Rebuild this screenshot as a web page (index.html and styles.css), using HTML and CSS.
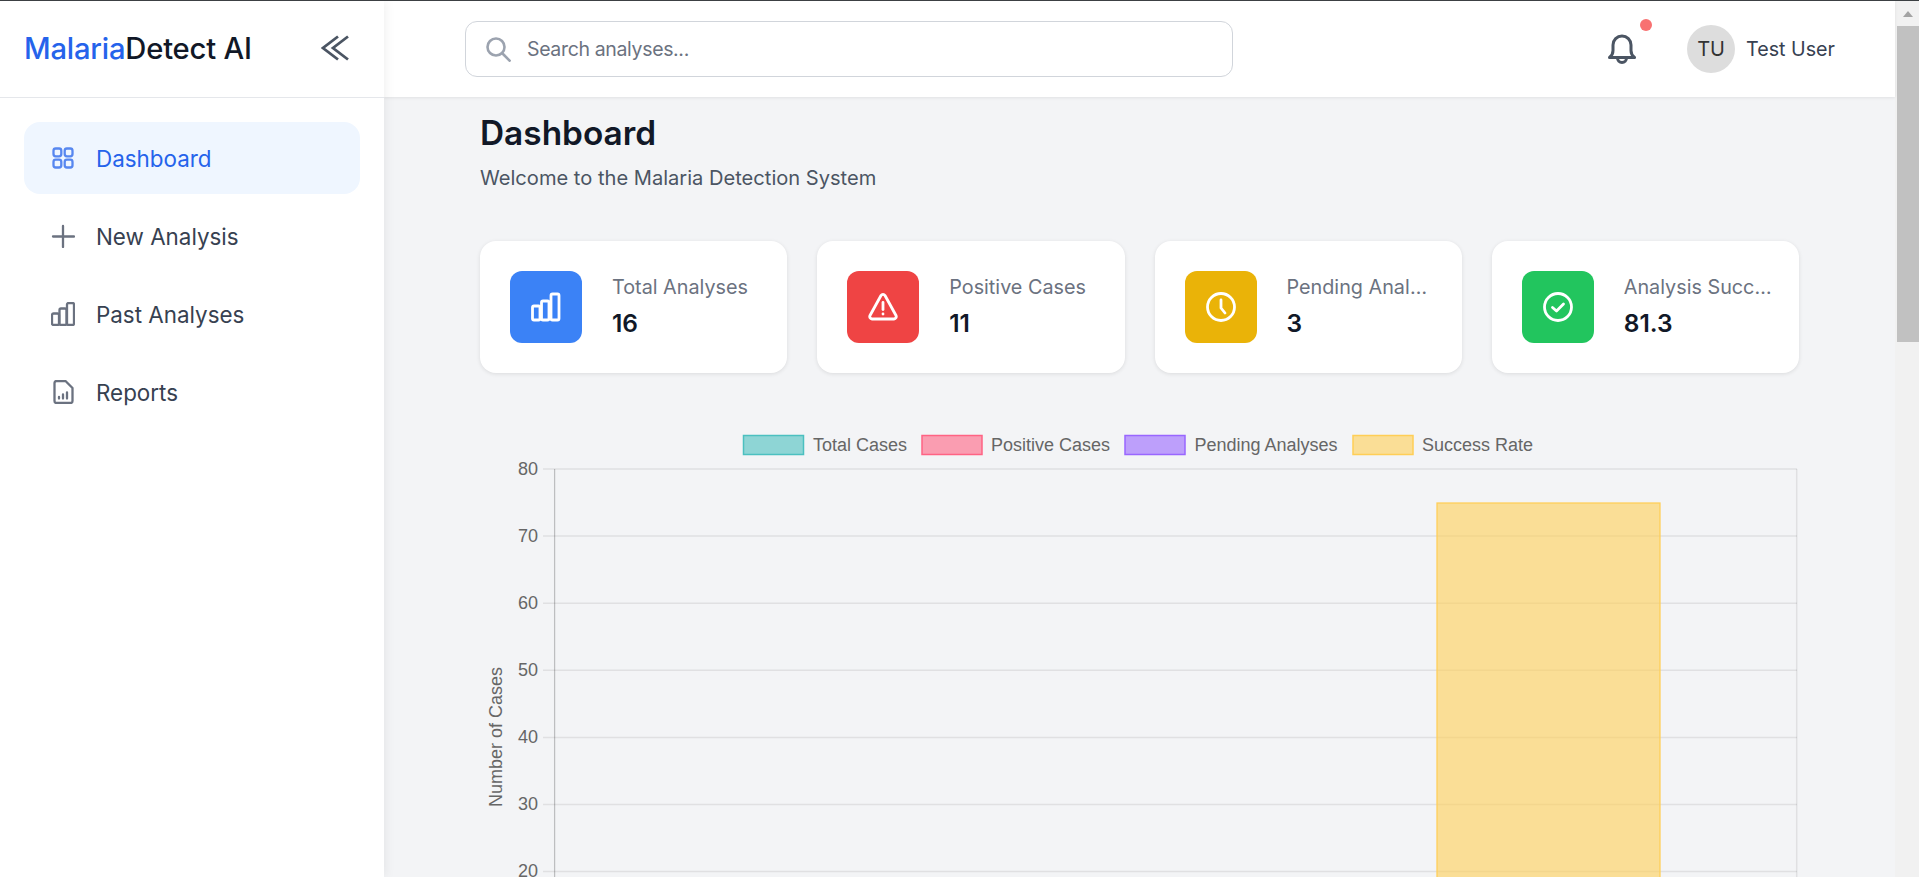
FILE: index.html
```html
<!DOCTYPE html>
<html lang="en">
<head>
<meta charset="utf-8">
<title>MalariaDetect AI</title>
<link rel="stylesheet" href="styles.css">
</head>
<body>
<div class="topline"></div>
<div class="app">
  <aside class="sidebar">
    <div class="brand">
      <div class="logo"><span class="logo-accent">Malaria</span>Detect AI</div>
      <svg class="collapse" viewBox="0 0 28 26" fill="none" stroke="currentColor" stroke-width="2.800"><path d="M17 1.500 2 13l15 11.500"/><path d="M27 1.500 12 13l15 11.500"/></svg>
    </div>
    <nav class="nav">
      <a class="nav-item active">
        <svg class="nav-icon" viewBox="0 0 24 24" fill="none" stroke="currentColor" stroke-width="2.300"><rect x="2.500" y="2.500" width="7.800" height="7.800" rx="2.200"/><rect x="13.700" y="2.500" width="7.800" height="7.800" rx="2.200"/><rect x="2.500" y="13.700" width="7.800" height="7.800" rx="2.200"/><rect x="13.700" y="13.700" width="7.800" height="7.800" rx="2.200"/></svg>
        <span>Dashboard</span>
      </a>
      <a class="nav-item">
        <svg class="nav-icon" viewBox="0 0 24 24" fill="none" stroke="currentColor" stroke-width="2.300" stroke-linecap="round"><path d="M12 2v21M2 12.500h21"/></svg>
        <span>New Analysis</span>
      </a>
      <a class="nav-item">
        <svg class="nav-icon" viewBox="0 0 24 24" fill="none" stroke="currentColor" stroke-width="2.300" stroke-linejoin="round"><rect x="1" y="11.500" width="7" height="11.500" rx="1.500"/><rect x="8.500" y="6.500" width="7" height="16.500" rx="1.500"/><rect x="16" y="1" width="7" height="22" rx="1.500"/></svg>
        <span>Past Analyses</span>
      </a>
      <a class="nav-item">
        <svg class="nav-icon" viewBox="0 0 24 24" fill="none" stroke="currentColor" stroke-width="2.300" stroke-linejoin="round" stroke-linecap="round"><path d="M5.500 1h9l7 7v13a2 2 0 0 1-2 2h-14a2 2 0 0 1-2-2V3a2 2 0 0 1 2-2z"/><path d="M8 18.500v-1.500M12 18.500v-4M16 18.500v-6"/></svg>
        <span>Reports</span>
      </a>
    </nav>
  </aside>
  <div class="main">
    <header class="header">
      <label class="search">
        <svg class="search-icon" viewBox="0 0 25 25" fill="none" stroke="currentColor" stroke-width="2.600"><circle cx="10" cy="10" r="8.500"/><path d="m16.500 16.500 8 8"/></svg>
        <span class="placeholder">Search analyses...</span>
      </label>
      <div class="header-right">
        <div class="bell">
          <svg class="bell-icon" viewBox="0 0 28 30" fill="none" stroke="currentColor" stroke-width="3" stroke-linecap="round" stroke-linejoin="round"><path d="M1.500 23.500c2-1.500 3.500-3.500 3.500-7V11a9 9 0 0 1 18 0v5.500c0 3.500 1.500 5.500 3.500 7z"/><path d="M9.500 24a4.500 4.500 0 0 0 9 0"/></svg>
          <span class="bell-dot"></span>
        </div>
        <div class="user">
          <div class="avatar">TU</div>
          <span class="user-name">Test User</span>
        </div>
      </div>
    </header>
    <main class="content">
      <h1 class="title">Dashboard</h1>
      <p class="subtitle">Welcome to the Malaria Detection System</p>
      <section class="cards">
        <div class="card">
          <div class="card-icon blue"><svg viewBox="0 0 30 30" fill="none" stroke="currentColor" stroke-width="2.800" stroke-linejoin="round"><rect x="1.500" y="14" width="7.500" height="14" rx="1.500"/><rect x="10.500" y="9" width="7.500" height="19" rx="1.500"/><rect x="20" y="2" width="8" height="26" rx="1.500"/></svg></div>
          <div class="card-text"><div class="card-label">Total Analyses</div><div class="card-value">16</div></div>
        </div>
        <div class="card">
          <div class="card-icon red"><svg viewBox="0 0 30 30" fill="none" stroke="currentColor" stroke-width="2.800" stroke-linejoin="round" stroke-linecap="round"><path d="M13 3.500a2.400 2.400 0 0 1 4 0l11 20a2.400 2.400 0 0 1-2 3.500H4a2.400 2.400 0 0 1-2-3.500z"/><path d="M15 10.500v7"/><path d="M15 22h.01"/></svg></div>
          <div class="card-text"><div class="card-label">Positive Cases</div><div class="card-value">11</div></div>
        </div>
        <div class="card">
          <div class="card-icon yellow"><svg viewBox="0 0 30 30" fill="none" stroke="currentColor" stroke-width="2.800" stroke-linecap="round" stroke-linejoin="round"><circle cx="15" cy="15" r="13.500"/><path d="M15 8v8l4 5"/></svg></div>
          <div class="card-text"><div class="card-label">Pending Analyses</div><div class="card-value">3</div></div>
        </div>
        <div class="card">
          <div class="card-icon green"><svg viewBox="0 0 30 30" fill="none" stroke="currentColor" stroke-width="2.800" stroke-linecap="round" stroke-linejoin="round"><circle cx="15" cy="15" r="13.500"/><path d="m9.500 15.500 4 3.500 7-7"/></svg></div>
          <div class="card-text"><div class="card-label">Analysis Success Rate</div><div class="card-value">81.3</div></div>
        </div>
      </section>
      <section class="chart">
        <svg class="chart-svg" viewBox="0 0 1319 457" width="1319" height="457">
          <g class="legend">
            <rect class="sw teal" x="263.500" y="15.500" width="60" height="19"/><text x="333" y="31">Total Cases</text>
            <rect class="sw pink" x="442" y="15.500" width="60" height="19"/><text x="511" y="31">Positive Cases</text>
            <rect class="sw purple" x="645" y="15.500" width="60" height="19"/><text x="714.500" y="31">Pending Analyses</text>
            <rect class="sw amber" x="873" y="15.500" width="60" height="19"/><text x="942" y="31">Success Rate</text>
          </g>
          <g class="grid">
            <path d="M63 49H1317M63 116.100H1317M63 183.200H1317M63 250.300H1317M63 317.400H1317M63 384.500H1317M63 451.600H1317"/>
            <path d="M1316.700 49V457"/>
          </g>
          <path class="axis" d="M74.600 49V457"/>
          <g class="ticks">
            <text x="58" y="55">80</text>
            <text x="58" y="122">70</text>
            <text x="58" y="189">60</text>
            <text x="58" y="256">50</text>
            <text x="58" y="323">40</text>
            <text x="58" y="390">30</text>
            <text x="58" y="457">20</text>
          </g>
          <text class="axis-title" transform="translate(22 317) rotate(-90)">Number of Cases</text>
          <rect class="bar" x="957" y="83" width="223" height="380"/>
        </svg>
      </section>
    </main>
  </div>
  <div class="scrollbar">
    <div class="scroll-arrow"></div>
    <div class="scroll-thumb"></div>
  </div>
</div>
</body>
</html>
```
FILE: styles.css
```css
* { box-sizing: border-box; }
html, body { margin: 0; height: 100%; overflow: hidden; }
body { font-family: "Inter", "Liberation Sans", sans-serif; background: #f3f4f6; color: #111827; }
.topline { height: 1px; background: #3c4043; }
.app { display: flex; height: 876px; overflow: hidden; }

.sidebar { width: 384px; flex: none; background: #fff; box-shadow: 2px 0 10px rgba(0,0,0,.06); z-index: 2; }
.brand { height: 97px; display: flex; align-items: center; justify-content: space-between; padding: 0 35px 2px 24px; border-bottom: 1px solid #e5e7eb; }
.logo { font-size: 29.200px; font-weight: 500; letter-spacing: -.2px; color: #111827; }
.logo-accent { color: #2563eb; }
.collapse { width: 28px; height: 26px; color: #4b5563; }
.nav { display: flex; flex-direction: column; gap: 6px; padding: 24px; }
.nav-item { height: 72px; display: flex; align-items: center; gap: 21px; padding: 0 27px; border-radius: 16px; font-size: 22.400px; color: #374151; }
.nav-item.active { background: #eff6ff; color: #2563eb; }
.nav-icon { width: 24px; height: 24px; flex: none; color: #6b7280; }
.active .nav-icon { color: #2563eb; opacity: .75; }

.main { flex: 1; min-width: 0; display: flex; flex-direction: column; }
.header { height: 96px; flex: none; background: #fff; display: flex; align-items: center; justify-content: space-between; padding: 0 60px 0 81px; box-shadow: 0 1px 3px rgba(0,0,0,.08); z-index: 1; }
.search { width: 768px; height: 56px; display: flex; align-items: center; gap: 16px; padding: 0 20px; border: 1px solid #d1d5db; border-radius: 12px; background: #fff; }
.search-icon { width: 25px; height: 25px; color: #9ca3af; flex: none; }
.placeholder { font-size: 19.500px; letter-spacing: -.35px; color: #6b7280; }
.header-right { display: flex; align-items: center; gap: 51px; }
.bell { position: relative; display: flex; }
.bell-icon { width: 28px; height: 30px; color: #4b5563; }
.bell-dot { position: absolute; top: -15px; right: -16px; width: 12px; height: 12px; border-radius: 50%; background: #f87171; }
.user { display: flex; align-items: center; gap: 11px; }
.avatar { width: 48px; height: 48px; border-radius: 50%; background: #ddd; display: flex; align-items: center; justify-content: center; font-size: 20px; color: #333; }
.user-name { font-size: 19.700px; color: #374151; }

.content { flex: 1; min-height: 0; padding: 0 96px; }
.title { margin: 14px 0 0; font-size: 33.400px; line-height: 44px; font-weight: 600; color: #111827; }
.subtitle { margin: 9px 0 0; font-size: 20.100px; line-height: 28px; color: #4b5563; }
.cards { margin-top: 49px; display: grid; grid-template-columns: repeat(4, 1fr); gap: 30px; }
.card { height: 132px; display: flex; align-items: center; gap: 30px; padding: 0 26px 0 30px; background: #fff; border-radius: 16px; box-shadow: 0 1px 4px rgba(0,0,0,.1); min-width: 0; }
.card-icon { width: 72px; height: 72px; flex: none; border-radius: 12px; display: flex; align-items: center; justify-content: center; color: #fff; }
.card-icon svg { width: 30px; height: 30px; }
.blue { background: #3b82f6; }
.red { background: #ef4444; }
.yellow { background: #eab308; }
.green { background: #22c55e; }
.card-text { min-width: 0; flex: 1; padding-bottom: 3px; }
.card-label { font-size: 19.800px; line-height: 28px; color: #6b7280; white-space: nowrap; overflow: hidden; text-overflow: ellipsis; }
.card-value { margin-top: 6px; font-size: 24.500px; line-height: 32px; font-weight: 600; color: #111827; }

.chart { margin-top: 47px; }
.chart-svg { display: block; font-family: "Liberation Sans", Arial, sans-serif; font-size: 18px; }
.chart-svg text { fill: #666; }
.sw { stroke-width: 1.5px; }
.teal { fill: rgba(75,192,192,.6); stroke: rgb(75,192,192); }
.pink { fill: rgba(255,99,132,.6); stroke: rgb(255,99,132); }
.purple { fill: rgba(153,102,255,.6); stroke: rgb(153,102,255); }
.amber { fill: rgba(255,206,86,.6); stroke: rgb(255,206,86); }
.grid path { fill: none; stroke: rgba(0,0,0,.08); stroke-width: 1.5px; }
.axis { fill: none; stroke: rgba(0,0,0,.22); stroke-width: 1.25px; }
.ticks text { text-anchor: end; }
.axis-title { text-anchor: middle; }
.bar { fill: rgba(255,206,86,.6); stroke: rgb(255,206,86); stroke-width: 1.25px; }

.scrollbar { width: 24px; flex: none; background: #f1f1f1; display: flex; flex-direction: column; align-items: flex-end; }
.scroll-arrow { width: 22px; height: 25px; flex: none; display: flex; align-items: center; justify-content: center; }
.scroll-arrow::before { content: ""; border-left: 5.500px solid transparent; border-right: 5.500px solid transparent; border-bottom: 6px solid #a3a3a3; }
.scroll-thumb { width: 22px; height: 316px; background: #c1c1c1; }
```
